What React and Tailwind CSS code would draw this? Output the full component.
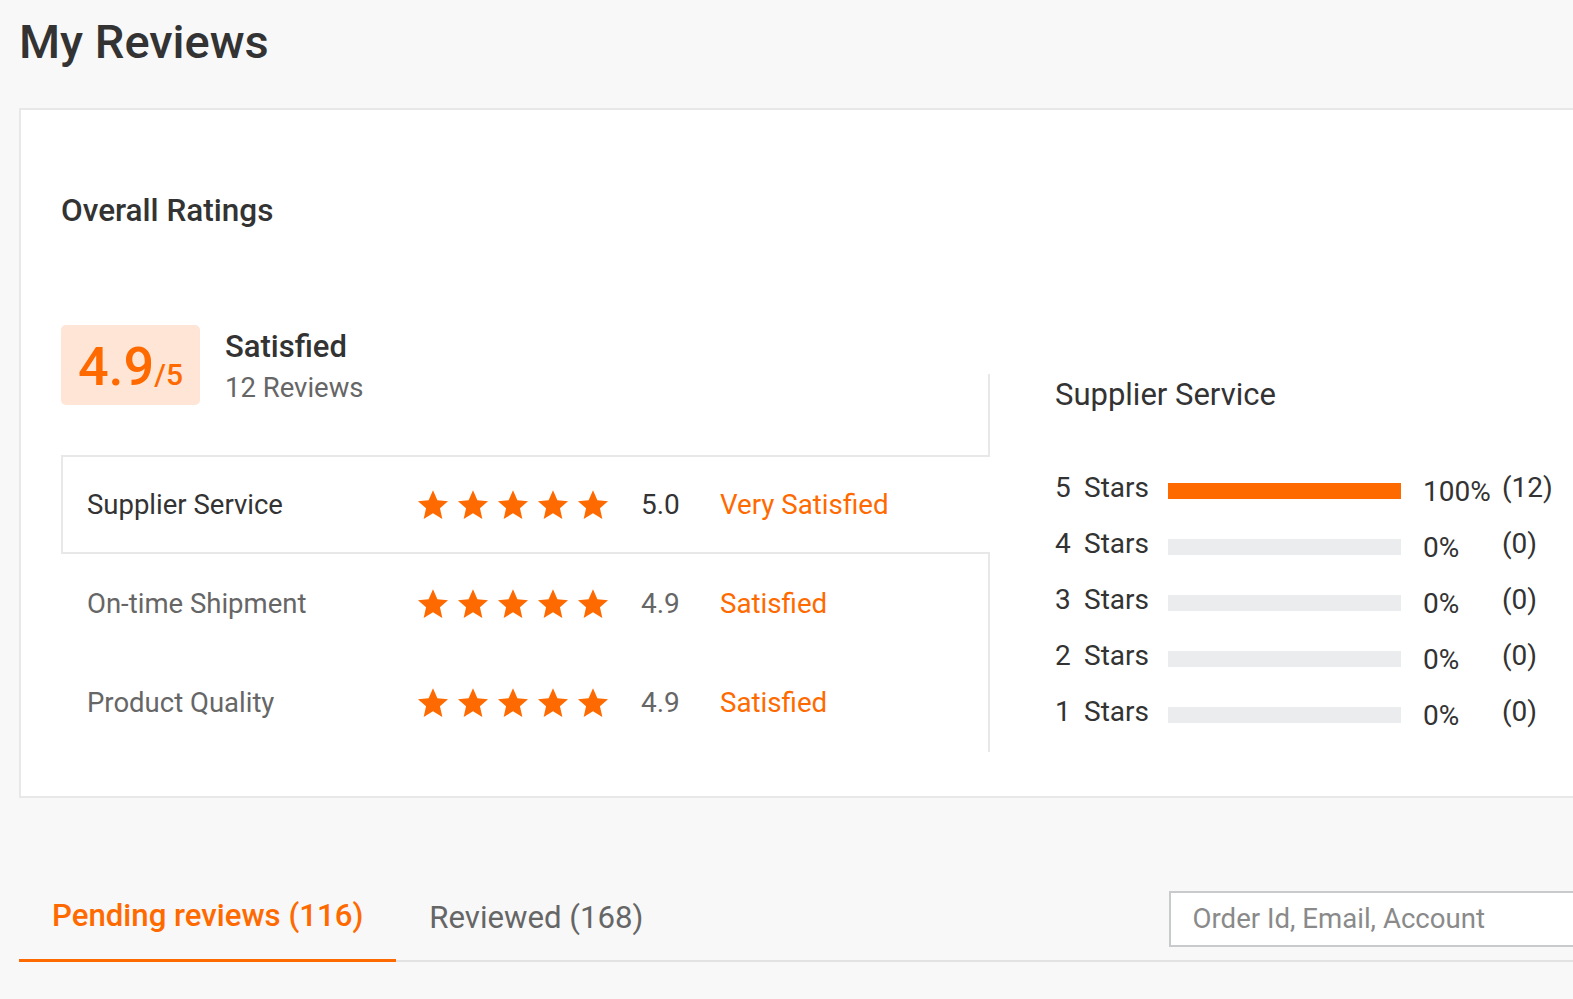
import React from "react";

const ORANGE = "text-[#ff6a00]";

const Star = () => (
  <svg viewBox="0 0 24 24" className="h-[34px] w-[34px] shrink-0" fill="#ff6a00">
    <path d="M12 1.6l3.1 7 7.5.7-5.7 5 1.7 7.5L12 17.9l-6.6 3.9 1.7-7.5-5.7-5 7.5-.7z" />
  </svg>
);

const ratingRows = [
  { label: "Supplier Service", score: "5.0", verdict: "Very Satisfied", active: true },
  { label: "On-time Shipment", score: "4.9", verdict: "Satisfied" },
  { label: "Product Quality", score: "4.9", verdict: "Satisfied" },
];

const distribution = [
  { stars: 5, pct: 100, count: 12 },
  { stars: 4, pct: 0, count: 0 },
  { stars: 3, pct: 0, count: 0 },
  { stars: 2, pct: 0, count: 0 },
  { stars: 1, pct: 0, count: 0 },
];

const RatingRow = ({ row }) => (
  <div
    className={
      row.active
        ? "relative -mr-[2px] flex h-[99px] items-center border-2 border-r-0 border-[#e8e8e8] bg-white pl-[24px]"
        : "flex h-[99px] items-center pl-[26px]"
    }
  >
    <span className={`w-[329px] text-[27.5px] ${row.active ? "text-[#333]" : "text-[#666]"}`}>{row.label}</span>
    <div className="flex w-[225px] gap-[6px]">
      {[0, 1, 2, 3, 4].map((i) => (
        <Star key={i} />
      ))}
    </div>
    <span className={`w-[79px] text-[28px] ${row.active ? "text-[#333]" : "text-[#666]"}`}>{row.score}</span>
    <span className={`text-[27.7px] ${ORANGE}`}>{row.verdict}</span>
  </div>
);

export default function App() {
  return (
    <div className="min-h-screen overflow-hidden bg-[#f8f8f8] font-['Roboto',sans-serif] text-[#333]">
      <div className="w-[1760px] pl-[19px]">
        <h1 className="pt-[14px] text-[47px] font-medium leading-[56px] text-[#333]">My Reviews</h1>

        {/* Overall ratings card */}
        <section className="mt-[38px] h-[690px] border-2 border-[#e8e8e8] bg-white pl-[40px] pt-[83px]">
          <h2 className="text-[31.5px] font-medium leading-[36px] text-[#333]">Overall Ratings</h2>

          <div className="mt-[96px] flex">
            {/* left column */}
            <div className="w-[929px]">
              <div className="flex h-[49px] items-start">
                <div className="flex h-[80px] w-[139px] shrink-0 items-baseline justify-center rounded-[5px] bg-[#fee5d6] pt-[12px]">
                  <span className={`text-[54px] font-medium leading-[60px] ${ORANGE}`}>4.9</span>
                  <span className={`text-[30px] font-medium ${ORANGE}`}>/5</span>
                </div>
                <div className="ml-[25px] flex flex-col pt-[2px]">
                  <span className="text-[31px] font-medium leading-[40px] text-[#333]">Satisfied</span>
                  <span className="text-[27.5px] leading-[42px] text-[#666]">12 Reviews</span>
                </div>
              </div>
              <div className="border-r-2 border-[#e8e8e8] pt-[81px]">
                {ratingRows.map((row) => (
                  <RatingRow key={row.label} row={row} />
                ))}
              </div>
            </div>

            {/* right column */}
            <div className="pl-[65px] pt-[52px]">
              <h3 className="text-[31px] leading-[36px] text-[#333]">Supplier Service</h3>
              <div className="mt-[47px]">
                {distribution.map((d) => (
                  <div key={d.stars} className="flex h-[56px] items-center text-[28px] text-[#333]">
                    <span className="w-[29px]">{d.stars}</span>
                    <span className="w-[84px]">Stars</span>
                    <div className="h-[16px] w-[233px] translate-y-[3px] bg-[#ebecee]">
                      <div className="h-full bg-[#ff6a00]" style={{ width: `${d.pct}%` }} />
                    </div>
                    <span className="w-[101px] translate-y-[4px] pl-[22px]">{d.pct}%</span>
                    <span>({d.count})</span>
                  </div>
                ))}
              </div>
            </div>
          </div>
        </section>

        {/* Tabs + search */}
        <div className="mt-[75px] flex h-[89px] items-center border-b-2 border-[#e2e2e2]">
          <button className={`-mb-[2px] flex h-[91px] shrink-0 items-center self-end whitespace-nowrap border-b-[3px] border-[#ff6a00] px-[33px] pt-[3px] text-[31.2px] font-medium ${ORANGE}`}>
            Pending reviews (116)
          </button>
          <button className="flex h-full shrink-0 items-center whitespace-nowrap px-[33px] pt-[3px] text-[31.2px] text-[#666]">
            Reviewed (168)
          </button>
          <div className="ml-[493px] mt-[4px] flex h-[56px] w-[600px] shrink-0 items-center border-2 border-[#c9cacc] bg-white pl-[21px] text-[27.6px] text-[#8a8a8a]">
            Order Id, Email, Account
          </div>
        </div>
      </div>
    </div>
  );
}
